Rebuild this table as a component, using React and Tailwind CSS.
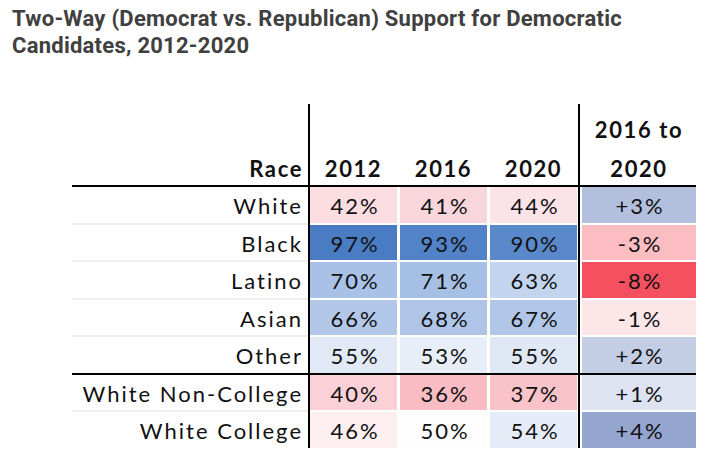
const GROUP_A = [
  { label: 'White', v: [['42%', 'bg-[#fbdde2]'], ['41%', 'bg-[#f9d6db]'], ['44%', 'bg-[#fce3e7]']], d: ['+3%', 'bg-[#b3c0dd]'] },
  { label: 'Black', v: [['97%', 'bg-[#4a7cc4]'], ['93%', 'bg-[#5282c8]'], ['90%', 'bg-[#5a89cb]']], d: ['-3%', 'bg-[#fbbcc2]'] },
  { label: 'Latino', v: [['70%', 'bg-[#a9c1e6]'], ['71%', 'bg-[#a6bfe5]'], ['63%', 'bg-[#c3d4ee]']], d: ['-8%', 'bg-[#f5505f]'] },
  { label: 'Asian', v: [['66%', 'bg-[#b3c8e9]'], ['68%', 'bg-[#aec5e8]'], ['67%', 'bg-[#b0c7e8]']], d: ['-1%', 'bg-[#fde6e8]'] },
  { label: 'Other', v: [['55%', 'bg-[#e1e8f6]'], ['53%', 'bg-[#e8eef8]'], ['55%', 'bg-[#e0e8f6]']], d: ['+2%', 'bg-[#c3cde4]'] },
];

const GROUP_B = [
  { label: 'White Non-College', v: [['40%', 'bg-[#fbd1d7]'], ['36%', 'bg-[#f9bcc2]'], ['37%', 'bg-[#f9c3c9]']], d: ['+1%', 'bg-[#dde3f0]'] },
  { label: 'White College', v: [['46%', 'bg-[#fdeef0]'], ['50%', 'bg-[#fdfdfe]'], ['54%', 'bg-[#e6ecf7]']], d: ['+4%', 'bg-[#94a6cf]'] },
];

// wrapper width / right gap for the three year columns
const COLS = ['w-[90px] pr-[3px]', 'w-[90px] pr-[3px]', 'w-[88px] pr-[1px]'];

function Row({ r, last }) {
  return (
    <div className={`flex ${last ? 'h-[35.5px]' : 'h-[37.5px]'}`}>
      <div className="w-[238px] shrink-0 border-r-2 border-black flex flex-col">
        <div className="h-[35.5px] shrink-0 text-right pr-[5px] pt-[6px] leading-[26px]">{r.label}</div>
        {!last && <div className="h-[2px] bg-[#efefef]" />}
      </div>
      {r.v.map(([txt, bg], i) => (
        <div key={i} className={`shrink-0 ${COLS[i]}`}>
          <div className={`h-[35.5px] pt-[6px] pl-[3px] leading-[26px] text-center ${bg}`}>{txt}</div>
        </div>
      ))}
      <div className="w-[118px] shrink-0 border-l-2 border-black pl-[2px]">
        <div className={`h-[35.5px] pt-[6px] pl-[2px] leading-[26px] text-center ${r.d[1]}`}>{r.d[0]}</div>
      </div>
    </div>
  );
}

export default function App() {
  return (
    <div className="min-h-[470px] w-[711px] bg-white overflow-hidden">
      <h1 className="pl-[12px] pt-[5px] pr-4 font-['Roboto',sans-serif] font-bold text-[22px] tracking-[0.25px] leading-[27px] text-[#404040]">
        Two-Way (Democrat vs. Republican) Support for Democratic Candidates, 2012-2020
      </h1>

      <div className="ml-[72px] mt-[45px] w-[624px] font-['Lato',sans-serif] text-[22px] tracking-[2px] text-[#111]">
        {/* Header */}
        <div className="flex h-[83px] border-b-2 border-black font-bold tracking-[1.6px]">
          <div className="w-[238px] shrink-0 border-r-2 border-black flex items-end justify-end pr-[5px]">
            <span className="leading-[30px] pb-[1px]">Race</span>
          </div>
          {['2012', '2016', '2020'].map((y, i) => (
            <div key={y} className={`shrink-0 flex items-end ${COLS[i]}`}>
              <span className="w-full text-center leading-[30px] pb-[1px]">{y}</span>
            </div>
          ))}
          <div className="w-[118px] shrink-0 border-l-2 border-black pl-[2px] flex flex-col justify-end items-center">
            <div className="leading-[30px]">2016 to</div>
            <div className="leading-[30px] mt-[9px] pb-[1px]">2020</div>
          </div>
        </div>

        {GROUP_A.map((r, i) => (
          <Row key={r.label} r={r} last={i === GROUP_A.length - 1} />
        ))}
        <div className="h-[2px] bg-black" />
        {GROUP_B.map((r, i) => (
          <Row key={r.label} r={r} last={i === GROUP_B.length - 1} />
        ))}
      </div>
    </div>
  );
}
